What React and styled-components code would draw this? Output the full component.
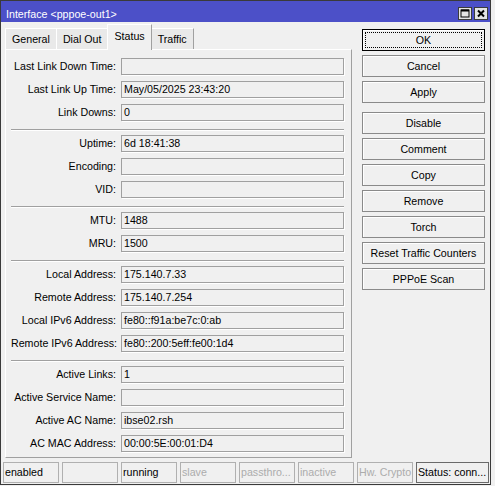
import React from 'react';
import styled, { createGlobalStyle } from 'styled-components';

const GlobalStyle = createGlobalStyle`
  html, body {
    margin: 0;
    padding: 0;
    background: #f0f0f0;
  }
  body {
    font-family: "Liberation Sans", Arial, sans-serif;
    font-size: 10.67px;
    color: #000;
  }
  * {
    box-sizing: border-box;
  }
`;

const Window = styled.div`
  width: 491px;
  height: 485px;
  border: 1px solid #3a3a3a;
  background: #f0f0f0;
  display: flex;
  flex-direction: column;
`;

const TitleBar = styled.div`
  height: 21px;
  flex: none;
  background: #4c50c8;
  color: #fff;
  display: flex;
  align-items: flex-start;
  padding: 6px 2px 0 5px;
`;

const Title = styled.div`
  flex: 1;
  margin-top: 1px;
  line-height: 12px;
  white-space: nowrap;
`;

const TitleButtons = styled.div`
  display: flex;
  gap: 2px;
`;

const TitleButton = styled.div`
  width: 14px;
  height: 13px;
  border: 1px solid #3c3c3c;
  background: #e4e4e4;
  display: flex;
  align-items: center;
  justify-content: center;
`;

const Body = styled.div`
  display: flex;
  flex: none;
`;

const LeftColumn = styled.div`
  width: 351px;
  padding: 2px 0 0 4px;
`;

const TabStrip = styled.div`
  height: 25px;
  display: flex;
  align-items: flex-end;
  position: relative;
  z-index: 1;
`;

const Tab = styled.div`
  height: ${({ $active }) => ($active ? '26px' : '21px')};
  margin-bottom: ${({ $active }) => ($active ? '-1px' : '0')};
  padding: 0 6px;
  line-height: ${({ $active }) => ($active ? '22px' : '20px')};
  background: ${({ $active }) => ($active ? '#f0f0f0' : '#e9e9e9')};
  border-top: 1px solid #fff;
  border-left: 1px solid #fff;
  border-right: 1px solid #a0a0a0;
  margin-right: -1px;
  position: relative;
  z-index: ${({ $active }) => ($active ? 2 : 1)};
  white-space: nowrap;
`;

const Panel = styled.div`
  width: 347px;
  border: 1px solid;
  border-color: #fff #a0a0a0 #a0a0a0 #fff;
  padding: 8px 7px 5px 5px;
`;

const Group = styled.div`
  display: grid;
  grid-template-columns: 105px 1fr;
  column-gap: 5px;
  row-gap: 6px;
`;

const Separator = styled.div`
  margin: 8px 0 4px;
  border-top: 1px solid #a0a0a0;
  border-bottom: 1px solid #fff;
`;

const Label = styled.div`
  text-align: right;
  line-height: 17px;
  white-space: nowrap;
`;

const Field = styled.div`
  height: 17px;
  border: 1px solid #a0a0a0;
  box-shadow: 1px 1px 0 #fff;
  padding: 0 2px;
  line-height: 15px;
  white-space: nowrap;
  overflow: hidden;
`;

const RightColumn = styled.div`
  width: 123px;
  margin-left: 10px;
  padding-top: 7px;
  display: flex;
  flex-direction: column;
  gap: 4px;
`;

const Button = styled.div`
  position: relative;
  height: 22px;
  line-height: 20px;
  text-align: center;
  border: 1px solid ${({ $default }) => ($default ? '#000' : '#8a8a8a')};
  box-shadow: inset 1px 1px 0 #fff;
  margin-top: ${({ $spaced }) => ($spaced ? '5px' : '0')};
  white-space: nowrap;

  &::after {
    content: '';
    display: ${({ $default }) => ($default ? 'block' : 'none')};
    position: absolute;
    inset: 2px;
    border: 1px dotted #000;
  }
`;

const StatusBar = styled.div`
  margin: 4px 1px 1px 2px;
  height: 21px;
  display: grid;
  grid-template-columns: repeat(7, 56px) 1fr;
  column-gap: 3px;
`;

const StatusCell = styled.div`
  border: 1px solid ${({ $strong }) => ($strong ? '#6a6a6a' : '#b0b0b0')};
  color: ${({ $dim }) => ($dim ? '#acacac' : '#000')};
  padding: 0 0 0 1px;
  line-height: 19px;
  white-space: nowrap;
  overflow: hidden;
`;

const tabs = ['General', 'Dial Out', 'Status', 'Traffic'];

const groups = [
  [
    ['Last Link Down Time', ''],
    ['Last Link Up Time', 'May/05/2025 23:43:20'],
    ['Link Downs', '0'],
  ],
  [
    ['Uptime', '6d 18:41:38'],
    ['Encoding', ''],
    ['VID', ''],
  ],
  [
    ['MTU', '1488'],
    ['MRU', '1500'],
  ],
  [
    ['Local Address', '175.140.7.33'],
    ['Remote Address', '175.140.7.254'],
    ['Local IPv6 Address', 'fe80::f91a:be7c:0:ab'],
    ['Remote IPv6 Address', 'fe80::200:5eff:fe00:1d4'],
  ],
  [
    ['Active Links', '1'],
    ['Active Service Name', ''],
    ['Active AC Name', 'ibse02.rsh'],
    ['AC MAC Address', '00:00:5E:00:01:D4'],
  ],
];

const buttons = [
  { label: 'OK', isDefault: true },
  { label: 'Cancel' },
  { label: 'Apply' },
  { label: 'Disable', spaced: true },
  { label: 'Comment' },
  { label: 'Copy' },
  { label: 'Remove' },
  { label: 'Torch' },
  { label: 'Reset Traffic Counters' },
  { label: 'PPPoE Scan' },
];

const statusCells = [
  { text: 'enabled' },
  { text: '' },
  { text: 'running' },
  { text: 'slave', dim: true },
  { text: 'passthro...', dim: true },
  { text: 'inactive', dim: true },
  { text: 'Hw. Crypto', dim: true },
  { text: 'Status: conn...', strong: true },
];

const MaximizeIcon = () => (
  <svg width="10" height="9" viewBox="0 0 10 9">
    <rect x="1" y="1" width="8" height="7" fill="none" stroke="#000" strokeWidth="1" />
    <rect x="1" y="0.5" width="8" height="2" fill="#000" />
  </svg>
);

const CloseIcon = () => (
  <svg width="10" height="9" viewBox="0 0 10 9">
    <path d="M2 1.5 L8 7.5 M8 1.5 L2 7.5" stroke="#000" strokeWidth="2" />
  </svg>
);

const App = () => {
  return (
    <>
      <GlobalStyle />
      <Window>
        <TitleBar>
          <Title>Interface &lt;pppoe-out1&gt;</Title>
          <TitleButtons>
            <TitleButton>
              <MaximizeIcon />
            </TitleButton>
            <TitleButton>
              <CloseIcon />
            </TitleButton>
          </TitleButtons>
        </TitleBar>
        <Body>
          <LeftColumn>
            <TabStrip>
              {tabs.map((tab) => (
                <Tab key={tab} $active={tab === 'Status'}>
                  {tab}
                </Tab>
              ))}
            </TabStrip>
            <Panel>
              {groups.map((group, index) => (
                <React.Fragment key={index}>
                  {index > 0 && <Separator />}
                  <Group>
                    {group.map(([label, value]) => (
                      <React.Fragment key={label}>
                        <Label>{label}:</Label>
                        <Field>{value}</Field>
                      </React.Fragment>
                    ))}
                  </Group>
                </React.Fragment>
              ))}
            </Panel>
          </LeftColumn>
          <RightColumn>
            {buttons.map((button) => (
              <Button
                key={button.label}
                $default={button.isDefault}
                $spaced={button.spaced}
              >
                {button.label}
              </Button>
            ))}
          </RightColumn>
        </Body>
        <StatusBar>
          {statusCells.map((cell, index) => (
            <StatusCell key={index} $dim={cell.dim} $strong={cell.strong}>
              {cell.text}
            </StatusCell>
          ))}
        </StatusBar>
      </Window>
    </>
  );
};

export default App;
